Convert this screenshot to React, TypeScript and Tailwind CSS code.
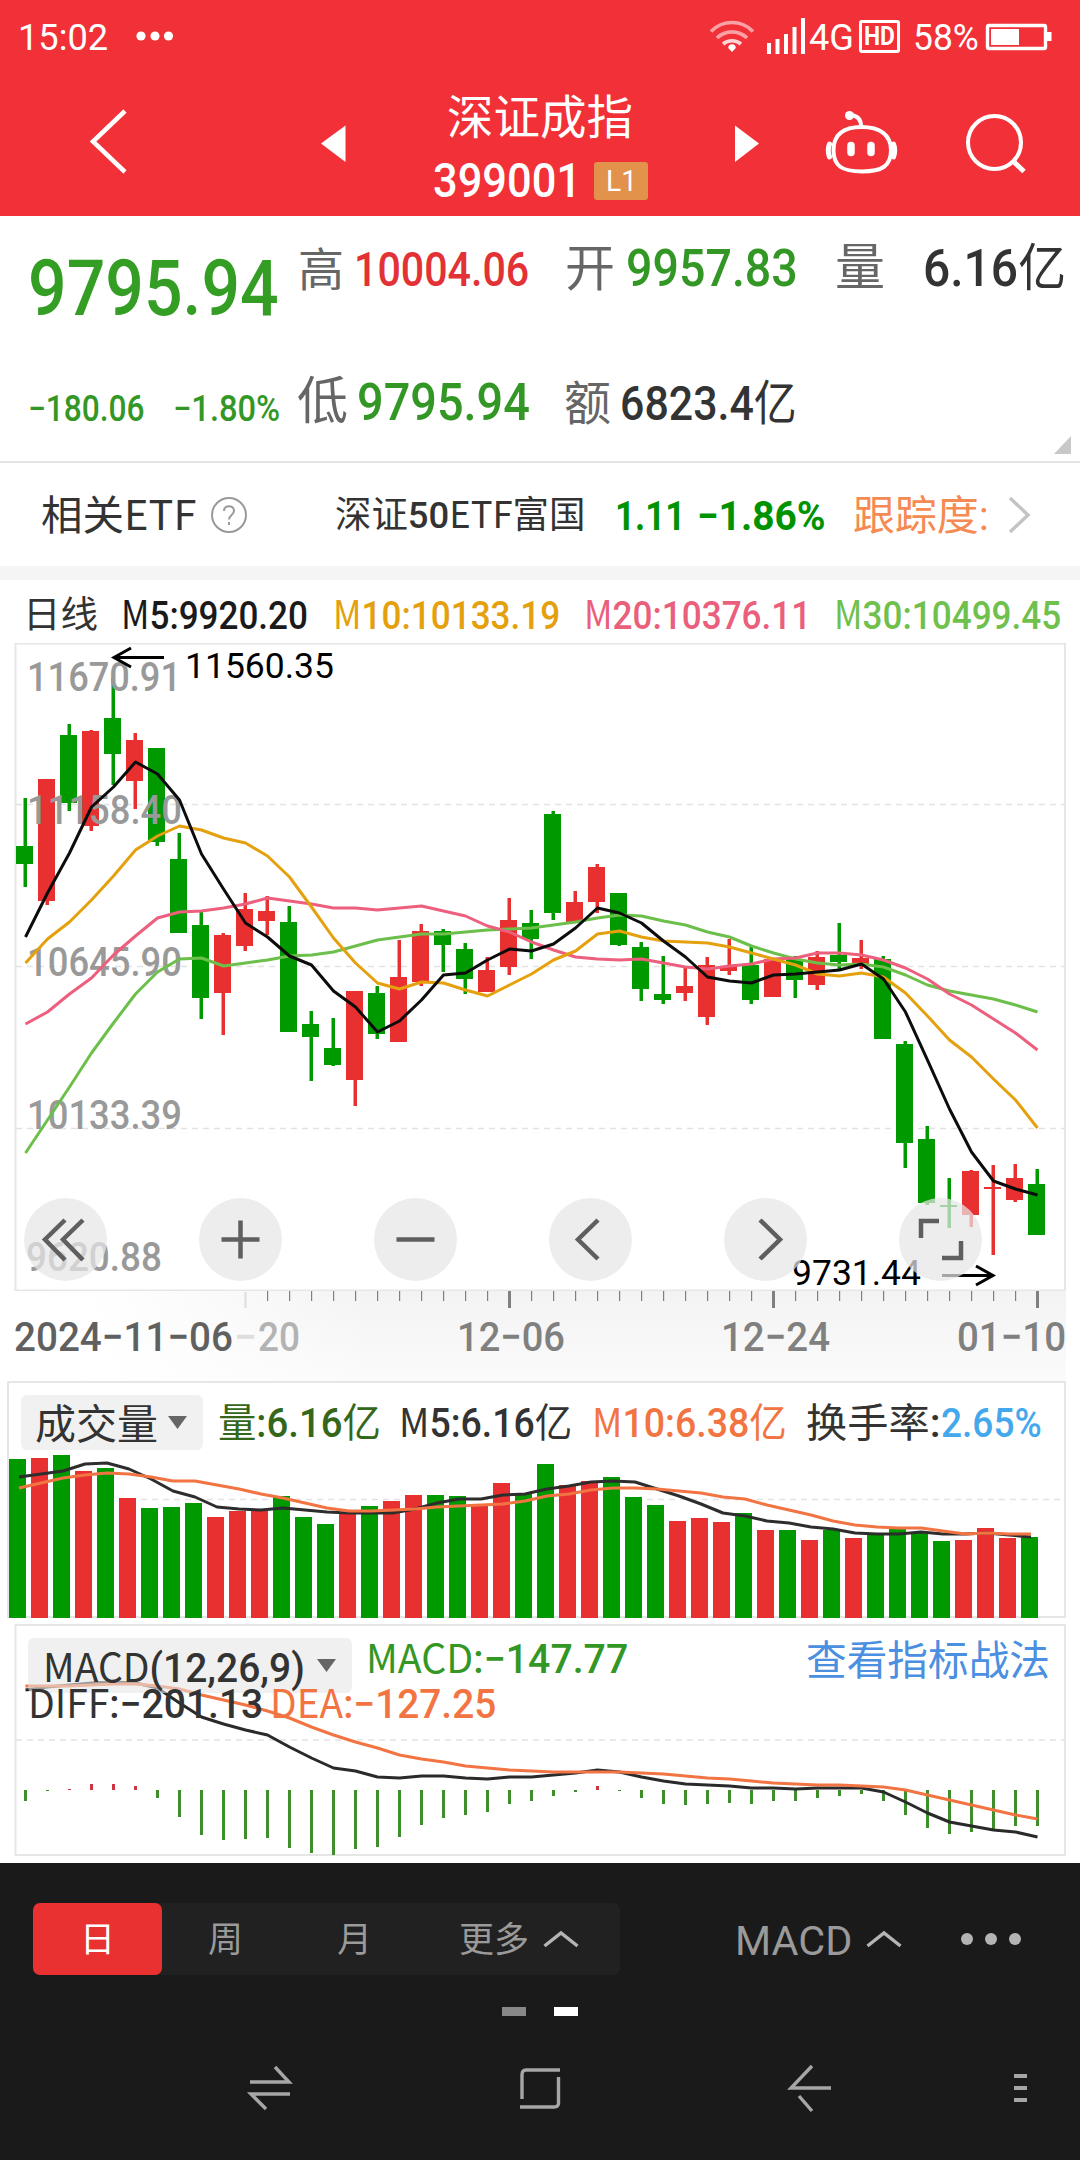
import React, { useLayoutEffect, useRef, useState } from 'react';

type Candle = [kind: 'R' | 'G', high: number, open: number, close: number, low: number];

// kind, wick top, body top, body bottom, wick bottom
const candles: Candle[] = [
  ['G', 798, 846, 864, 887], ['R', 779, 779, 901, 905], ['G', 724, 735, 803, 811], ['R', 730, 731, 826, 831],
  ['G', 678, 718, 754, 785], ['R', 733, 740, 781, 809], ['G', 748, 748, 842, 846], ['G', 833, 859, 933, 933],
  ['G', 912, 925, 998, 1019], ['R', 933, 935, 993, 1035], ['R', 893, 909, 946, 951], ['R', 896, 911, 921, 935],
  ['G', 906, 922, 1032, 1032], ['G', 1011, 1024, 1037, 1081], ['G', 1018, 1048, 1065, 1066], ['R', 991, 991, 1080, 1106],
  ['G', 986, 993, 1034, 1039], ['R', 940, 977, 1042, 1042], ['R', 924, 931, 982, 986], ['G', 929, 931, 945, 972],
  ['G', 943, 949, 979, 994], ['R', 957, 970, 992, 992], ['R', 898, 920, 967, 975], ['G', 910, 923, 939, 959],
  ['G', 811, 814, 913, 920], ['R', 891, 902, 922, 922], ['R', 864, 867, 902, 913], ['G', 893, 893, 945, 946],
  ['G', 942, 947, 989, 1001], ['G', 956, 994, 1000, 1004], ['R', 968, 986, 993, 1001], ['R', 957, 965, 1017, 1025],
  ['R', 939, 966, 971, 975], ['G', 947, 965, 1000, 1004], ['R', 959, 959, 997, 997], ['G', 956, 959, 980, 998],
  ['R', 951, 957, 985, 990], ['G', 923, 955, 962, 969], ['R', 940, 958, 965, 969], ['G', 956, 959, 1039, 1039],
  ['G', 1041, 1044, 1143, 1168], ['G', 1126, 1139, 1203, 1205], ['G', 1178, 1205, 1207, 1228], ['R', 1170, 1171, 1215, 1227],
  ['R', 1165, 1187, 1189, 1255], ['R', 1164, 1178, 1200, 1202], ['G', 1169, 1184, 1235, 1235],
];

const ma5 = [937, 893, 853, 807, 787, 762, 774, 800, 854, 889, 923, 937, 956, 965, 991, 1007, 1032, 1021, 1000, 975, 973, 960, 949, 951, 944, 928, 908, 913, 923, 941, 957, 977, 981, 983, 975, 974, 972, 970, 964, 979, 1012, 1060, 1109, 1152, 1181, 1189, 1195];
const ma10 = [963, 939, 922, 900, 876, 850, 836, 826, 830, 838, 843, 856, 877, 907, 938, 963, 983, 989, 982, 983, 990, 996, 985, 974, 960, 951, 934, 931, 937, 941, 942, 943, 947, 953, 959, 965, 974, 976, 973, 977, 993, 1016, 1040, 1057, 1079, 1100, 1128];
const ma20 = [1024, 1012, 994, 978, 955, 936, 918, 912, 911, 908, 904, 898, 901, 904, 908, 908, 910, 908, 906, 911, 916, 926, 932, 942, 950, 957, 959, 960, 959, 963, 967, 969, 966, 964, 959, 958, 953, 953, 955, 960, 968, 979, 994, 1005, 1019, 1033, 1050];
const ma30 = [1153, 1120, 1087, 1053, 1023, 994, 972, 959, 958, 966, 963, 960, 956, 955, 952, 946, 940, 937, 934, 934, 932, 930, 929, 928, 925, 922, 918, 915, 916, 921, 925, 932, 937, 946, 953, 959, 963, 965, 964, 967, 975, 985, 991, 995, 999, 1005, 1012];

const volumes = [1459, 1458, 1455, 1471, 1468, 1498, 1508, 1507, 1503, 1517, 1511, 1511, 1496, 1517, 1524, 1513, 1506, 1501, 1495, 1495, 1496, 1506, 1483, 1494, 1464, 1485, 1481, 1477, 1497, 1505, 1521, 1518, 1522, 1513, 1530, 1530, 1540, 1530, 1538, 1533, 1528, 1532, 1541, 1540, 1528, 1538, 1537];
const vol5 = [1477, 1474, 1471, 1464, 1463, 1469, 1479, 1491, 1497, 1507, 1509, 1510, 1508, 1510, 1512, 1513, 1513, 1513, 1509, 1503, 1499, 1499, 1495, 1494, 1489, 1486, 1482, 1481, 1482, 1489, 1496, 1504, 1513, 1516, 1521, 1523, 1527, 1529, 1533, 1534, 1534, 1532, 1534, 1534, 1533, 1535, 1537];
const vol10 = [1488, 1483, 1478, 1475, 1473, 1474, 1477, 1481, 1481, 1485, 1489, 1494, 1498, 1503, 1508, 1511, 1511, 1510, 1509, 1507, 1506, 1505, 1504, 1501, 1496, 1494, 1490, 1488, 1488, 1489, 1491, 1493, 1497, 1499, 1505, 1510, 1515, 1521, 1525, 1527, 1528, 1528, 1531, 1534, 1533, 1534, 1534];

const MACD_ZERO = 1790;
const macd = [1801, 1791, 1789, 1784, 1784, 1786, 1798, 1817, 1835, 1840, 1839, 1838, 1848, 1853, 1855, 1849, 1847, 1837, 1825, 1818, 1815, 1812, 1804, 1801, 1796, 1792, 1786, 1791, 1798, 1804, 1805, 1804, 1803, 1804, 1801, 1801, 1798, 1796, 1794, 1801, 1815, 1828, 1834, 1832, 1829, 1826, 1826];
const diff = [1690, 1687, 1685, 1683, 1682, 1683, 1688, 1703, 1717, 1724, 1730, 1735, 1747, 1758, 1768, 1771, 1777, 1778, 1776, 1776, 1778, 1779, 1777, 1777, 1775, 1773, 1770, 1772, 1777, 1781, 1784, 1785, 1786, 1788, 1788, 1789, 1788, 1788, 1788, 1792, 1802, 1813, 1822, 1826, 1830, 1832, 1837];
const dea = [1686, 1686, 1686, 1685, 1684, 1684, 1686, 1689, 1695, 1700, 1705, 1711, 1718, 1727, 1735, 1742, 1748, 1755, 1759, 1762, 1766, 1768, 1770, 1771, 1772, 1772, 1772, 1772, 1773, 1774, 1776, 1778, 1779, 1781, 1783, 1784, 1785, 1785, 1786, 1787, 1790, 1795, 1800, 1805, 1810, 1815, 1819];

const STEP = 22;
const RED = '#e93030';
const GREEN = '#009a00';

const toPoints = (values: number[], x0: number) => values.map((y, i) => `${x0 + i * STEP},${y}`).join(' ');

// Squeezes a line of text horizontally into a fixed width
const Fit: React.FC<{ w: number; className?: string; children: React.ReactNode }> = ({ w, className = '', children }) => {
  const ref = useRef<HTMLSpanElement>(null);
  const [scale, setScale] = useState(1);

  useLayoutEffect(() => {
    if (ref.current) setScale(w / ref.current.offsetWidth);
  }, [w]);

  return (
    <div className={`shrink-0 whitespace-nowrap ${className}`} style={{ width: w }}>
      <span ref={ref} className="inline-block origin-left" style={{ transform: `scaleX(${scale})` }}>
        {children}
      </span>
    </div>
  );
};

const Cjk: React.FC<{ children: React.ReactNode }> = ({ children }) => (
  <span className="font-['Noto_Sans_CJK_SC',sans-serif] leading-none font-normal">{children}</span>
);

const StatusBar = () => (
  <div className="flex h-[72px] shrink-0 items-center pt-[2px] text-white">
    <Fit w={90} className="mt-[2px] ml-[18px] text-[37px] leading-[48px]">15:02</Fit>
    <svg className="ml-[27px] h-[12px] w-[40px]" viewBox="0 0 40 12" fill="white">
      <circle cx="6" cy="5" r="4.6" />
      <circle cx="20" cy="5" r="4.6" />
      <circle cx="33.5" cy="5" r="4.6" />
    </svg>
    <svg className="mt-[-2px] ml-auto h-[40px] w-[100px]" viewBox="708 16 100 40" fill="none">
      <g stroke="white" strokeOpacity=".55" strokeWidth="3.6">
        <path d="M711 31.500a29 29 0 0 1 42 0" />
        <path d="M717 38a21.500 21.500 0 0 1 30 0" />
        <path d="M723 44a14 14 0 0 1 18 0" strokeOpacity=".8" />
      </g>
      <path d="M732 52l-3.800-4a3.800 3.800 0 0 1 7.600 0z" fill="white" />
      <g fill="white">
        <rect x="767" y="43" width="4" height="11" />
        <rect x="775.5" y="39" width="4" height="15" />
        <rect x="784" y="34" width="4" height="20" />
        <rect x="792.5" y="27" width="4" height="27" />
        <rect x="801" y="18" width="4" height="36" />
      </g>
    </svg>
    <Fit w={45} className="mt-[2px] ml-[1px] text-[37px] leading-[48px]">4G</Fit>
    <div className="mt-[-1px] ml-[5px] flex h-[33px] w-[41px] items-center justify-center rounded-[3px] border-[3px] border-white">
      <Fit w={31} className="text-[25px] leading-[26px] font-bold">HD</Fit>
    </div>
    <Fit w={66} className="mt-[2px] ml-[13px] text-[36px] leading-[48px]">58%</Fit>
    <svg className="mt-[-1px] mr-[27px] ml-[6px] h-[28px] w-[68px]" viewBox="0 0 68 28">
      <rect x="2.5" y="2.5" width="58" height="23" rx="1.5" fill="none" stroke="white" strokeWidth="3.4" />
      <rect x="6" y="6" width="28" height="16" fill="white" />
      <rect x="62" y="9" width="4.5" height="9" fill="white" />
    </svg>
  </div>
);

const Header = () => (
  <div className="flex h-[144px] shrink-0 items-start text-white">
    <svg className="mt-[34px] ml-[86px] h-[70px] w-[46px]" viewBox="86 106 46 70" fill="none" stroke="white" strokeWidth="4.5">
      <path d="M125 111L93 141.500L125 172" />
    </svg>
    <svg className="mt-[53px] ml-[189px] h-[38px] w-[26px]" viewBox="0 0 26 38" fill="white">
      <path d="M0 18.500L24.500 0.500V37z" />
    </svg>
    <div className="flex w-[388px] flex-col items-center">
      <div className="mt-[17px] mr-[2px] text-[46.5px] leading-[58px]">深证成指</div>
      <div className="mt-[10px] flex w-full items-center pl-[86px]">
        <Fit w={148} className="text-[49px] leading-[48px] font-medium">399001</Fit>
        <div className="ml-[13px] flex h-[38px] w-[54px] items-center justify-center rounded-[3px] bg-[#e2924b]">
          <Fit w={31} className="text-[30px] leading-[38px]">L1</Fit>
        </div>
      </div>
    </div>
    <svg className="mt-[53px] h-[38px] w-[26px]" viewBox="0 0 26 38" fill="white">
      <path d="M24 18.500L0 0.500V37z" />
    </svg>
    <svg className="mt-[34px] ml-[61px] h-[74px] w-[76px]" viewBox="822 106 76 74" fill="none" stroke="white" strokeWidth="4">
      <path d="M861.500 127C880 127 891 135 891 150C891 166 882 171.500 862 171.500C842 171.500 833.500 166 833.500 150C833.500 135 843 127 861.500 127z" />
      <path d="M829.500 144c-1.500 4-1.500 9 0 13M893.500 144c1.500 4 1.500 9 0 13" strokeWidth="5" strokeLinecap="round" />
      <path d="M861 126c0-6-3-10-10-11" />
      <circle cx="849.5" cy="115.5" r="4.5" fill="white" stroke="none" />
      <path d="M851 145.500v7M871 145.500v7" strokeWidth="7.5" strokeLinecap="round" />
    </svg>
    <svg className="mt-[34px] ml-[62px] h-[74px] w-[74px]" viewBox="960 106 74 74" fill="none" stroke="white" strokeWidth="4">
      <circle cx="994.5" cy="142.5" r="26.500" />
      <path d="M1013 161L1024 171.500" strokeWidth="5" />
    </svg>
  </div>
);

const QuotePanel = () => (
  <div className="relative h-[247px] shrink-0 border-b-2 border-[#e4e4e4] leading-[60px] text-[#666]">
    <div className="flex h-[140px] items-start pt-[24px]">
      <Fit w={251} className="mt-[19px] ml-[28px] text-[78px] font-medium text-[#339e23]">9795.94</Fit>
      <Fit w={46} className="ml-[19px] text-[46px]">高</Fit>
      <Fit w={175} className="ml-[10px] text-[48px] font-medium text-[#e23236]">10004.06</Fit>
      <Fit w={50} className="mt-[-1px] ml-[36px] text-[50px]">开</Fit>
      <Fit w={172} className="ml-[11px] mt-[-1px] text-[52px] font-medium text-[#339726]">9957.83</Fit>
      <Fit w={50} className="mt-[-2px] ml-[37px] text-[50px]">量</Fit>
      <Fit w={143} className="mt-[-1px] ml-[38px] text-[51px] font-medium text-[#333]">6.16<Cjk>亿</Cjk></Fit>
    </div>
    <div className="flex items-start pt-[16px]">
      <Fit w={117} className="mt-[7px] ml-[28px] text-[36px] font-medium text-[#339726]">−180.06</Fit>
      <Fit w={107} className="mt-[7px] ml-[28px] text-[36px] font-medium text-[#339726]">−1.80%</Fit>
      <Fit w={51} className="ml-[17px] text-[51px]">低</Fit>
      <Fit w={173} className="mt-[1px] ml-[9px] text-[52px] font-medium text-[#339726]">9795.94</Fit>
      <Fit w={47} className="mt-[2px] ml-[34px] text-[47px]">额</Fit>
      <Fit w={177} className="mt-[2px] ml-[9px] text-[48px] font-medium text-[#333]">6823.4<Cjk>亿</Cjk></Fit>
    </div>
    <svg className="absolute right-[9px] bottom-[7px] h-[18px] w-[17px]" viewBox="0 0 17 18" fill="#c8c8c8">
      <path d="M17 0V18H0z" />
    </svg>
  </div>
);

const EtfRow = () => (
  <div className="flex h-[117px] shrink-0 items-center border-b-[14px] border-[#f5f5f5] leading-[60px] text-[#333]">
    <Fit w={155} className="mt-[2px] ml-[41px] text-[41px]"><Cjk>相关ETF</Cjk></Fit>
    <svg className="ml-[14px] h-[38px] w-[38px]" viewBox="0 0 38 38" fill="none" stroke="#999" strokeWidth="2">
      <circle cx="19" cy="19" r="17" />
      <path d="M14 15c0-6.500 10-6.500 10 0c0 4-5 4-5 8.500M19 26v3" />
    </svg>
    <Fit w={250} className="mt-[2px] ml-[87px] text-[37px] font-medium"><Cjk>深证</Cjk>50<Cjk>ETF富国</Cjk></Fit>
    <Fit w={70} className="mt-[2px] ml-[30px] text-[41px] font-bold text-[#009300]">1.11</Fit>
    <Fit w={129} className="mt-[2px] ml-[12px] text-[41px] font-bold text-[#009300]">−1.86%</Fit>
    <Fit w={136} className="mt-[2px] ml-[27px] text-[41px] text-[#f58a52]">跟踪度:</Fit>
    <svg className="ml-[18px] h-[38px] w-[26px]" viewBox="0 0 26 38" fill="none" stroke="#c4c4c4" strokeWidth="3.5">
      <path d="M3 2L21 19L3 36" />
    </svg>
  </div>
);

const MaRow = () => (
  <div className="flex h-[63px] shrink-0 items-center pt-[8px] text-[39px] leading-[54px] font-medium">
    <Fit w={75} className="ml-[23px] text-[37px] font-normal text-[#333]">日线</Fit>
    <Fit w={187} className="ml-[23px] text-[#1a1a1a]"><Cjk>M</Cjk>5:9920.20</Fit>
    <Fit w={227} className="ml-[25px] text-[#e5a00e]"><Cjk>M</Cjk>10:10133.19</Fit>
    <Fit w={227} className="ml-[24px] text-[#ea5f7c]"><Cjk>M</Cjk>20:10376.11</Fit>
    <Fit w={227} className="ml-[23px] text-[#6fc04c]"><Cjk>M</Cjk>30:10499.45</Fit>
  </div>
);

const axisLabels = [
  { text: '11670.91', x: 27, y: 691, w: 154 },
  { text: '11158.40', x: 27, y: 824, w: 155 },
  { text: '10645.90', x: 27, y: 976, w: 155 },
  { text: '10133.39', x: 27, y: 1129, w: 155 },
  { text: '9620.88', x: 26, y: 1271, w: 136 },
];

const KLineChart = () => (
  <div className="relative h-[648px] shrink-0">
    <svg className="h-[648px] w-[1080px]" viewBox="0 643 1080 648" fill="none">
      <rect x="15.5" y="643.5" width="1049.5" height="647" stroke="#e6e6e6" strokeWidth="2" />
      {[804.5, 966.5, 1128.5].map(y => (
        <path key={y} d={`M16 ${y}H1065`} stroke="#e2e2e2" strokeWidth="1.5" strokeDasharray="6 5" />
      ))}
      {candles.map(([kind, high, top, bottom, low], i) => (
        <g key={i} fill={kind === 'R' ? RED : GREEN}>
          <rect x={23.5 + i * STEP} y={high} width="3.5" height={low - high} />
          <rect x={16 + i * STEP} y={top} width="17" height={bottom - top} />
        </g>
      ))}
      <g fill="#999" fontSize="41" fontWeight="500">
        {axisLabels.map(l => (
          <text key={l.text} x={l.x} y={l.y} textLength={l.w} lengthAdjust="spacingAndGlyphs">{l.text}</text>
        ))}
      </g>
      <g strokeWidth="3" strokeLinejoin="round">
        <polyline points={toPoints(ma30, 25.5)} stroke="#6cbf4a" />
        <polyline points={toPoints(ma20, 25.5)} stroke="#ec5f7d" />
        <polyline points={toPoints(ma10, 25.5)} stroke="#e5a00e" />
        <polyline points={toPoints(ma5, 25.5)} stroke="#0c0c0c" />
      </g>
      <g stroke="black" strokeWidth="3">
        <path d="M164 657.500H114M131 648L114 657.500L131 667" />
        <path d="M942 1275.500H993M976 1266L993 1275.500L976 1285" />
      </g>
      <g fill="black" fontSize="35">
        <text x="185" y="678" textLength="149" lengthAdjust="spacingAndGlyphs">11560.35</text>
        <text x="792" y="1285" textLength="129" lengthAdjust="spacingAndGlyphs">9731.44</text>
      </g>
    </svg>
    <div className="absolute top-[555px] left-[24px] flex gap-[92px]">
      {[
        'M41 22L21 41.500L41 62M59 22L39 41.500L59 62',
        'M22.500 41.500H60.500M41.500 22.500V60.500',
        'M22.500 41.500H60.500',
        'M49 22L29 41.500L49 61',
        'M36 22L56 41.500L36 61',
        'M22 40V23H40M62 43V60H43',
      ].map(d => (
        <button key={d} className="size-[83px] rounded-full bg-[#e6e6e6]/72">
          <svg className="size-[83px]" viewBox="0 0 83 83" fill="none" stroke="#5f5f5f" strokeWidth="4.5">
            <path d={d} />
          </svg>
        </button>
      ))}
    </div>
  </div>
);

const dateLabels = [
  { text: '12−06', x: 457, w: 108 },
  { text: '12−24', x: 721, w: 109 },
  { text: '01−10', x: 957, w: 109 },
];

const DateAxis = () => (
  <div className="h-[90px] shrink-0 bg-linear-to-b from-[#f3f3f3] to-[#fbfbfb]">
    <svg className="h-[90px] w-[1080px]" viewBox="0 1291 1080 90">
      <defs>
        <linearGradient id="fade">
          <stop offset="0" stopColor="white" />
          <stop offset="0.1" stopColor="white" stopOpacity=".95" />
          <stop offset=".35" stopColor="white" stopOpacity="0" />
        </linearGradient>
      </defs>
      <rect y="1291" width="1080" height="90" fill="url(#fade)" />
      <rect x="1066" y="1291" width="14" height="90" fill="white" />
      <rect x="244.5" y="1292" width="2" height="16" fill="#ddd" />
      {Array.from({ length: 36 }, (_, k) => k + 11).map(i => {
        const major = i % 12 === 10;
        return (
          <rect key={i} x={25 + i * STEP - (major ? 1 : 0)} y="1291" width={major ? 3 : 1.2} height={major ? 17 : 10} fill="#808080" />
        );
      })}
      <g fontSize="41" fontWeight="500" fill="#808080">
        <text x="234" y="1351" fill="#dedede">−</text>
        <text x="258" y="1351" textLength="42" lengthAdjust="spacingAndGlyphs" fill="#b3b3b3">20</text>
        <text x="14" y="1351" textLength="219" lengthAdjust="spacingAndGlyphs" fill="#606060">2024−11−06</text>
        {dateLabels.map(l => (
          <text key={l.text} x={l.x} y="1351" textLength={l.w} lengthAdjust="spacingAndGlyphs">{l.text}</text>
        ))}
      </g>
    </svg>
  </div>
);

const Caret = ({ className = '' }) => (
  <svg className={`h-[13px] w-[19px] ${className}`} viewBox="0 0 19 13" fill="#666">
    <path d="M0 0H19L9.500 13z" />
  </svg>
);

const VolumeChart = () => (
  <div className="relative h-[240px] shrink-0">
    <svg className="absolute inset-0 h-[240px] w-[1080px]" viewBox="0 1381 1080 240" fill="none">
      <rect x="8" y="1382" width="1057" height="235" stroke="#e6e6e6" strokeWidth="2" />
      <path d="M9 1499.500H1065" stroke="#e2e2e2" strokeWidth="1.5" strokeDasharray="6 5" />
      {volumes.map((y, i) => (
        <rect key={i} x={9 + i * STEP} y={y} width="17" height={1618 - y} fill={candles[i][0] === 'R' ? RED : GREEN} />
      ))}
      <g strokeWidth="3" strokeLinejoin="round">
        <polyline points={toPoints(vol5, 19)} stroke="#2d2d2d" />
        <polyline points={toPoints(vol10, 19)} stroke="#f27442" />
      </g>
    </svg>
    <div className="relative flex pt-[14px] pl-[21px] text-[40px] leading-[54px] font-medium text-[#333]">
      <div className="flex h-[55px] w-[182px] items-center rounded-[6px] bg-[#f1f1f1] pl-[14px]">
        <Fit w={123} className="mt-[4px] text-[41px] font-normal">成交量</Fit>
        <Caret className="ml-[10px]" />
      </div>
      <Fit w={163} className="mt-[2px] ml-[15px] text-[#35671a]"><Cjk>量</Cjk>:6.16<Cjk>亿</Cjk></Fit>
      <Fit w={173} className="mt-[2px] ml-[18px]"><Cjk>M</Cjk>5:6.16<Cjk>亿</Cjk></Fit>
      <Fit w={195} className="mt-[2px] ml-[20px] text-[#f27442]"><Cjk>M</Cjk>10:6.38<Cjk>亿</Cjk></Fit>
      <Fit w={135} className="mt-[2px] ml-[19px]"><Cjk>换手率</Cjk>:</Fit>
      <Fit w={101} className="mt-[2px] text-[#45a8ec]">2.65%</Fit>
    </div>
  </div>
);

const MacdChart = () => (
  <div className="relative h-[242px] shrink-0">
    <svg className="absolute inset-0 h-[242px] w-[1080px]" viewBox="0 1621 1080 242" fill="none">
      <rect x="15.5" y="1625" width="1049.5" height="230" stroke="#e6e6e6" strokeWidth="2" />
      <path d="M16 1740H1065" stroke="#e2e2e2" strokeWidth="1.5" strokeDasharray="6 5" />
      {macd.map((y, i) => (
        <rect
          key={i}
          x={24 + i * STEP}
          y={Math.min(y, MACD_ZERO)}
          width="3"
          height={Math.abs(y - MACD_ZERO)}
          fill={y < MACD_ZERO ? '#cf3540' : '#3c8f2b'}
        />
      ))}
      <g strokeWidth="3" strokeLinejoin="round">
        <polyline points={toPoints(diff, 25.5)} stroke="#2a2a2a" />
        <polyline points={toPoints(dea, 25.5)} stroke="#f27442" />
      </g>
    </svg>
    <div className="relative flex pt-[17px] pl-[28px] text-[40px] leading-[52px] font-medium text-[#333]">
      <div className="flex h-[55px] w-[324px] items-center rounded-[6px] bg-[#e6e6e6]/60 pl-[15px]">
        <Fit w={262} className="mt-[6px]"><Cjk>MACD</Cjk>(12,26,9)</Fit>
        <Caret className="ml-[12px]" />
      </div>
      <Fit w={262} className="mt-[-4px] ml-[14px] text-[#339726]"><Cjk>MACD</Cjk>:−147.77</Fit>
      <Fit w={244} className="mt-[-3px] ml-[178px] text-[41px] font-normal text-[#4b8fe0]">查看指标战法</Fit>
    </div>
    <div className="relative mt-[-14px] flex pl-[28px] text-[40px] leading-[52px] font-medium text-[#333]">
      <Fit w={235}><Cjk>DIFF</Cjk>:−201.13</Fit>
      <Fit w={226} className="ml-[7px] text-[#f27442]"><Cjk>DEA</Cjk>:−127.25</Fit>
    </div>
  </div>
);

const UpChevron = ({ className = '' }) => (
  <svg className={`h-[18px] w-[36px] ${className}`} viewBox="0 0 36 18" fill="none" stroke="#b4b4b4" strokeWidth="3.5">
    <path d="M1.500 16L18 3L34.500 16" />
  </svg>
);

const BottomBar = () => (
  <div className="h-[297px] shrink-0 bg-[#1a1a1a] pt-[40px] text-[35px] text-[#9a9a9a]">
    <div className="flex h-[72px] items-center pl-[33px]">
      <div className="flex h-[72px] w-[587px] items-center rounded-[7px] bg-[#212121]">
        <div className="flex h-[72px] w-[129px] items-center justify-center rounded-[7px] bg-[#ea3131] pt-[5px] text-white">日</div>
        <div className="w-[127px] pt-[5px] text-center">周</div>
        <div className="w-[131px] pt-[5px] text-center">月</div>
        <div className="ml-[39px] pt-[5px]">更多</div>
        <UpChevron className="ml-[14px]" />
      </div>
      <Fit w={117} className="mt-[3px] ml-[115px] text-[41px] leading-[60px]">MACD</Fit>
      <UpChevron className="ml-[14px]" />
      <div className="ml-[59px] flex gap-[12px]">
        <i className="size-[12px] rounded-full bg-[#b4b4b4]" />
        <i className="size-[12px] rounded-full bg-[#b4b4b4]" />
        <i className="size-[12px] rounded-full bg-[#b4b4b4]" />
      </div>
    </div>
    <div className="mt-[32px] flex justify-center gap-[28px]">
      <i className="h-[9px] w-[24px] bg-[#888]" />
      <i className="h-[9px] w-[24px] bg-white" />
    </div>
    {/* System navigation */}
    <svg className="mt-[42px] h-[60px] w-[1080px]" viewBox="0 2058 1080 60" fill="none" stroke="#a6a6a6" strokeWidth="3.4">
      <path d="M250 2082H289L275 2067M290 2094H251L266 2109" />
      <path d="M560 2070H526Q522 2070 522 2075V2099M520 2107H554Q558.500 2107 558.500 2103V2077" />
      <path d="M831 2088H791L812 2066M799 2096L812 2111" />
      <path d="M1014 2076H1027M1014 2088H1027M1014 2100H1027" strokeWidth="3.8" />
    </svg>
  </div>
);

const App: React.FC = () => {
  return (
    <div className="flex h-[2160px] w-[1080px] flex-col overflow-hidden bg-white font-[Roboto,'Noto_Sans_CJK_SC',sans-serif]">
      <div className="shrink-0 bg-[#f23037]">
        <StatusBar />
        <Header />
      </div>
      <QuotePanel />
      <EtfRow />
      <MaRow />
      <KLineChart />
      <DateAxis />
      <VolumeChart />
      <MacdChart />
      <BottomBar />
    </div>
  );
};

export default App;
